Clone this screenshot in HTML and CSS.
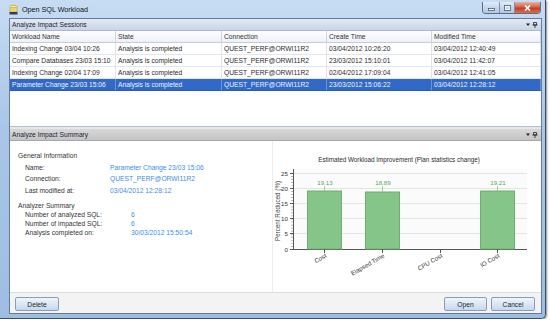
FILE: index.html
```html
<!DOCTYPE html>
<html lang="en">
<head>
<meta charset="utf-8">
<title>Open SQL Workload</title>
<link rel="stylesheet" href="styles.css">
</head>
<body>
<div class="window">
	<div class="titlebar">
		<svg class="appicon" width="9" height="11" viewBox="0 0 9 11">
			<path d="M1 2.5C1 1 8 1 8 2.5V8H1Z" fill="#f2d46a" stroke="#b89a2c" stroke-width="0.6"/>
			<ellipse cx="4.5" cy="2.5" rx="3.5" ry="1.2" fill="#fbeeb0" stroke="#b89a2c" stroke-width="0.6"/>
			<path d="M0.5 8h8v2.5h-8z" fill="#2c3a6b"/>
		</svg>
		<span class="title">Open SQL Workload</span>
		<div class="controls">
			<span class="ctl min"><svg width="7" height="3"><rect x="0.5" y="0.5" width="6" height="2" fill="#fff" stroke="#4a5d78" stroke-width="0.8"/></svg></span>
			<span class="ctl max"><svg width="7" height="6"><rect x="0.5" y="0.5" width="6" height="5" fill="none" stroke="#4a5d78" stroke-width="0.8"/><rect x="1.5" y="1.6" width="4" height="3" fill="none" stroke="#fff" stroke-width="0.8"/></svg></span>
			<span class="ctl close"><svg width="7" height="6"><path d="M1 0.5L6 5.5M6 0.5L1 5.5" stroke="#fff" stroke-width="1.6"/></svg></span>
		</div>
	</div>

	<div class="client">
		<div class="panelhead sessions-head">
			<span>Analyze Impact Sessions</span>
			<svg class="pins" width="12" height="6"><path d="M0 1.5H4L2 4Z" fill="#222"/><path d="M7.5 0.5h3v2.5h-3z M6.5 3h5 M9 3v3" fill="none" stroke="#222" stroke-width="0.8"/></svg>
		</div>
		<div class="grid">
			<table>
				<colgroup><col class="c1"><col class="c2"><col class="c3"><col class="c4"><col class="c5"></colgroup>
				<thead>
					<tr><th>Workload Name</th><th>State</th><th>Connection</th><th>Create Time</th><th>Modified Time</th></tr>
				</thead>
				<tbody>
					<tr><td>Indexing Change 03/04 10:26</td><td>Analysis is completed</td><td>QUEST_PERF@ORWI11R2</td><td>03/04/2012 10:26:20</td><td>03/04/2012 12:40:49</td></tr>
					<tr><td>Compare Databases 23/03 15:10</td><td>Analysis is completed</td><td>QUEST_PERF@ORWI11R2</td><td>23/03/2012 15:10:01</td><td>03/04/2012 11:42:07</td></tr>
					<tr><td>Indexing Change 02/04 17:09</td><td>Analysis is completed</td><td>QUEST_PERF@ORWI11R2</td><td>02/04/2012 17:09:04</td><td>03/04/2012 12:41:05</td></tr>
					<tr class="selected"><td>Parameter Change 23/03 15:06</td><td>Analysis is completed</td><td>QUEST_PERF@ORWI11R2</td><td>23/03/2012 15:06:22</td><td>03/04/2012 12:28:12</td></tr>
				</tbody>
			</table>
		</div>
		<div class="splitter"></div>

		<div class="panelhead summary-head">
			<span>Analyze Impact Summary</span>
			<svg class="pins" width="12" height="6"><path d="M0 1.5H4L2 4Z" fill="#222"/><path d="M7.5 0.5h3v2.5h-3z M6.5 3h5 M9 3v3" fill="none" stroke="#222" stroke-width="0.8"/></svg>
		</div>
		<div class="summary">
			<div class="info">
				<div class="ghead">General Information</div>
				<div class="group general">
					<span>Name:</span><span class="val">Parameter Change 23/03 15:06</span>
					<span>Connection:</span><span class="val">QUEST_PERF@ORWI11R2</span>
					<span>Last modified at:</span><span class="val">03/04/2012 12:28:12</span>
				</div>
				<div class="ghead analyzer">Analyzer Summary</div>
				<div class="group stats">
					<span>Number of analyzed SQL:</span><span class="val">6</span>
					<span>Number of impacted SQL:</span><span class="val">6</span>
					<span>Analysis completed on:</span><span class="val">30/03/2012 15:50:54</span>
				</div>
			</div>
			<div class="chartbox">
				<svg class="chart" width="267" height="151" viewBox="0 0 267 151">
					<text class="ctitle" x="126" y="20.5" text-anchor="middle">Estimated Workload Improvement (Plan statistics change)</text>
					<rect x="20" y="28" width="234" height="80" fill="#fbfbfb"/>
					<path d="M20 32.5H254M20 47.5H254M20 62.5H254M20 77.5H254M20 92.5H254" stroke="#e4e4e4"/>
					<line x1="19" y1="32" x2="19" y2="108" stroke="#777" stroke-width="1.4" stroke-dasharray="0.7 2.34"/>
					<path d="M17 32.5H20M17 47.5H20M17 62.5H20M17 77.5H20M17 92.5H20M17 108.5H20" stroke="#555"/>
					<path d="M20.5 28V109M20 108.5H254" stroke="#555"/>
					<g class="ytick" text-anchor="end">
						<text x="15" y="34.5">25</text>
						<text x="15" y="49.5">20</text>
						<text x="15" y="64.5">15</text>
						<text x="15" y="79.5">10</text>
						<text x="15" y="94.5">5</text>
						<text x="15" y="110.5">0</text>
					</g>
					<text class="ylabel" transform="translate(7 70) rotate(-90)" text-anchor="middle">Percent Reduced (%)</text>

					<g class="bars">
						<rect x="34.5" y="50" width="34" height="58"/>
						<rect x="92.5" y="51" width="34" height="57"/>
						<rect x="207.5" y="50" width="34" height="58"/>
					</g>
					<path d="M51.5 45V50M109.5 45V51M224.5 45V50" stroke="#9ccc9f"/>
					<g class="vals" text-anchor="middle">
						<text x="52" y="43.5">19.13</text>
						<text x="110" y="43.5">18.89</text>
						<text x="225" y="43.5">19.21</text>
					</g>
					<path d="M51.5 108V112M109.5 108V112M167.5 108V112M224.5 108V112" stroke="#555"/>
					<g class="xtick" text-anchor="end">
						<text transform="translate(54 116) rotate(-30)">Cost</text>
						<text transform="translate(112 116) rotate(-30)">Elapsed Time</text>
						<text transform="translate(170 116) rotate(-30)">CPU Cost</text>
						<text transform="translate(227 116) rotate(-30)">IO Cost</text>
					</g>
				</svg>
			</div>
		</div>

		<div class="buttons">
			<button class="btn wide">Delete</button>
			<span class="spacer"></span>
			<button class="btn">Open</button>
			<button class="btn wide">Cancel</button>
		</div>
	</div>
</div>
</body>
</html>
```

FILE: styles.css
```css
body{margin:0;background:#fff;font-family:"Liberation Sans",Arial,sans-serif;font-size:6.7px;color:#2b2b2b;}
.window{width:546px;height:319px;box-sizing:border-box;display:flex;flex-direction:column;padding:0 3px 4px 9px;border:solid #3d4f66;border-width:0 1px 1px 0;border-radius:0 0 5px 0;background:linear-gradient(#c6dcf2,#a9c6e8 40%,#9ebde2);box-shadow:1px 1px 2px rgba(0,0,0,.45);}

.titlebar{height:18px;display:flex;align-items:center;flex:none;}
.appicon{margin:0 4px 0 0;}
.title{font-size:7.2px;color:#111;}
.controls{display:flex;align-self:flex-start;height:11px;margin:2px 1px 0 auto;border:1px solid #5a6e8b;border-top:none;border-radius:0 0 4px 4px;overflow:hidden;}
.ctl{display:flex;align-items:center;justify-content:center;background:linear-gradient(#e3ecf7,#c6d6ea 50%,#b4c8e2);border-right:1px solid #7a92b0;}
.ctl.min{width:16px;}
.ctl.min svg{margin-top:4px;}
.ctl.max{width:14px;}
.ctl.close{width:25px;border-right:none;background:linear-gradient(#e9b0a0,#d4654e 45%,#c23d25 55%,#d9704f);}

.client{flex:1;display:flex;flex-direction:column;border:1px solid #637b9c;background:#fff;}

.panelhead{height:12px;flex:none;box-sizing:border-box;display:flex;align-items:center;justify-content:space-between;padding:0 3px 0 2px;color:#1b2533;}
.sessions-head{background:linear-gradient(#e1e9f3,#c8d5e5);border-bottom:1px solid #a9b8cb;}
.summary-head{background:linear-gradient(#d8d8d8,#c4c4c4);border-bottom:1px solid #a8a8a8;}

.grid{height:96px;flex:none;box-sizing:border-box;border-bottom:1px solid #b5bfcc;overflow:hidden;}
.grid table{width:531px;table-layout:fixed;border-collapse:separate;border-spacing:0;}
.grid col.c1,.grid col.c2{width:106px;}
.grid col.c3,.grid col.c4{width:105px;}
.grid col.c5{width:109px;}
.grid th,.grid td{height:11px;line-height:11px;padding:0 2px;text-align:left;font-weight:normal;white-space:nowrap;overflow:hidden;border-right:1px solid #dfe2e6;border-bottom:1px solid #e3e6ea;}
.grid th{color:#333;background:linear-gradient(#fdfdfe,#edf1f6);border-right-color:#cdd5df;border-bottom-color:#c5ccd6;}
.grid tr.selected td{background:#3169c6;color:#eef3fc;border-right-color:#6b93d6;border-bottom-color:#2a5bb0;}

.splitter{height:2px;flex:none;background:#e4e8ed;}

.summary{height:151px;flex:none;display:flex;}
.info{width:263px;box-sizing:border-box;padding:9.3px 0 0 8px;border-right:1px solid #ededed;}
.ghead{line-height:11.4px;color:#333;}
.ghead.analyzer{margin-top:4.1px;}
.group{display:grid;padding-left:7px;color:#333;}
.group.general{grid-template-columns:85px 1fr;line-height:11.4px;}
.group.stats{grid-template-columns:106px 1fr;line-height:8.7px;}
.val{color:#3c8ee6;}

.chartbox{flex:1;}
.chart{display:block;font-family:"Liberation Sans",Arial,sans-serif;}
.chart text{font-size:6.2px;fill:#333;}
.chart .ctitle{font-size:6.3px;fill:#2b2b2b;}
.chart .ylabel{font-size:6.3px;fill:#444;}
.chart .vals text{fill:#55a65a;}
.bars rect{fill:#86c589;stroke:#6cb070;stroke-width:1;}

.buttons{flex:1;display:flex;align-items:flex-start;padding:4px 6px 0 5px;border-top:1px solid #dcdcdc;background:#f3f3f3;}
.spacer{flex:1;}
.btn{width:43px;height:14px;margin:0;padding:0;font:6.7px "Liberation Sans",Arial,sans-serif;color:#1f1f1f;border:1px solid #8b9db5;border-radius:2px;background:linear-gradient(#eef4fb,#dbe7f4 50%,#c7d8ec);}
.btn.wide{width:44px;}
.btn + .btn{margin-left:4px;}
```
